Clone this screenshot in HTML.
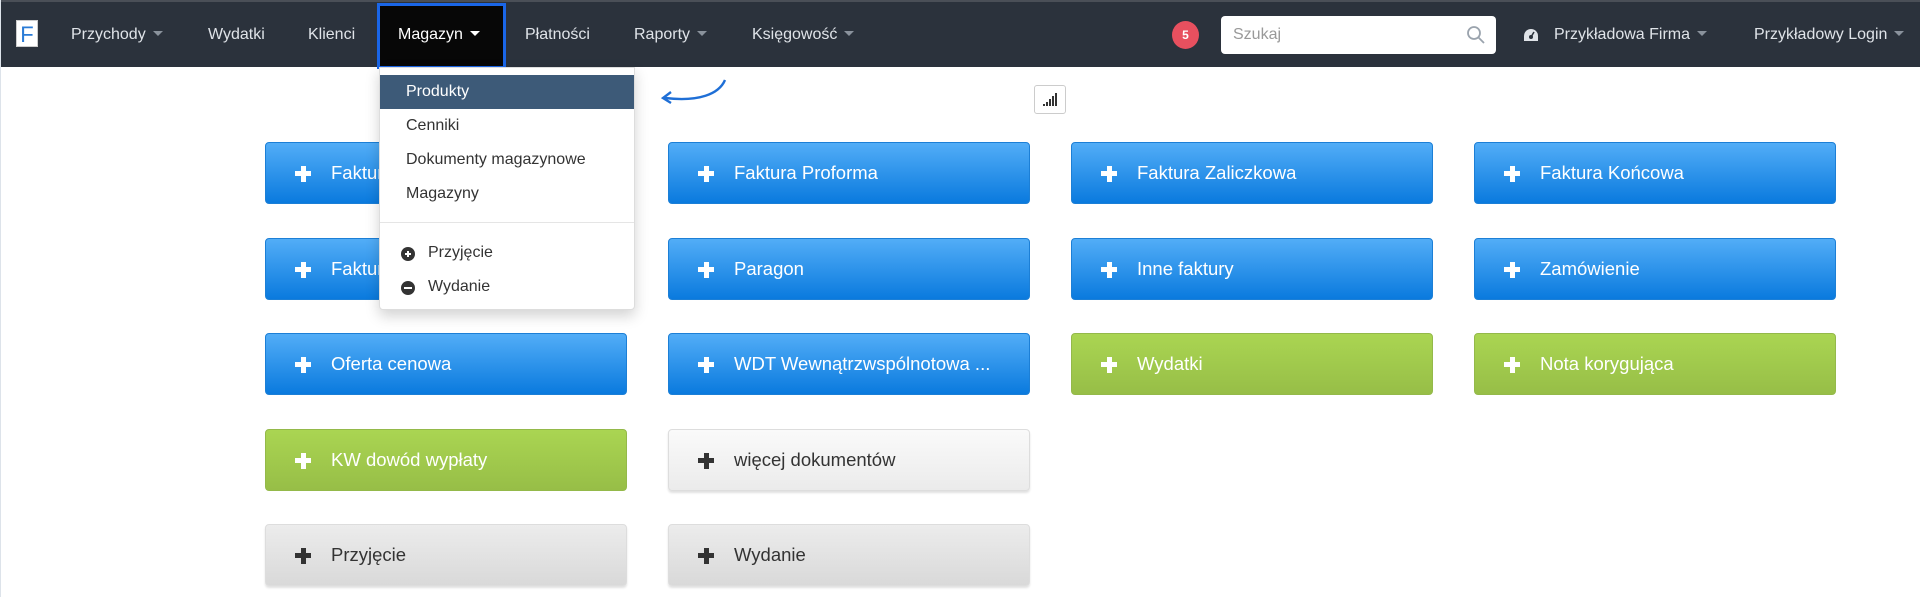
<!DOCTYPE html>
<html><head><meta charset="utf-8"><style>
*{box-sizing:border-box;margin:0;padding:0}
body{width:1920px;height:597px;overflow:hidden;background:#fff;font-family:"Liberation Sans",Arial,sans-serif;position:relative;border-left:1px solid #dde3ea}
.nav{position:absolute;left:0;top:0;width:1920px;height:67px;background:#2b323c;border-top:2px solid #4a4f57}
.nav span{position:absolute;top:24px;color:#dfe3e8;font-size:16px;white-space:nowrap}
.car{display:inline-block;width:0;height:0;border-left:5px solid transparent;border-right:5px solid transparent;border-top:5px solid #8a929c;margin-left:7px;vertical-align:3px}
.logo{position:absolute;left:15px;top:18px;width:22px;height:27px;background:#fff;color:#2a7bd6;font-size:22px;line-height:27px;text-align:center;border:1px solid #ccc}
.mag{position:absolute;left:376px;top:1px;width:129px;height:66px;background:#070707;border:3px solid #1a66e8}
.dd{position:absolute;left:378px;top:67px;width:256px;height:243px;background:#fff;border:1px solid #ddd;border-radius:0 0 4px 4px;box-shadow:0 6px 14px rgba(0,0,0,.18);z-index:5}
.dd div{position:absolute;left:0;width:100%;font-size:16px;color:#333;padding-left:26px}
.btn{position:absolute;width:362px;height:62px;border-radius:4px;color:#fff;font-size:18.5px;line-height:60px;padding-left:65px;white-space:nowrap}
.btn:before{content:"";position:absolute;left:29px;top:28px;width:16px;height:5px;background:currentColor}
.btn:after{content:"";position:absolute;left:34.5px;top:22.5px;width:5px;height:16px;background:currentColor}
.b{background:linear-gradient(#52adf7,#0a7ade);border:1px solid #1c7fd6}
.g{background:linear-gradient(#aad552,#97be47);border:1px solid #94b94a}
.w{background:linear-gradient(#fafafa,#ebebeb);border:1px solid #ddd;color:#333;box-shadow:0 2px 2px rgba(0,0,0,.12)}
.gr{background:linear-gradient(#ececec,#d9d9d9);border:1px solid #ddd;color:#333;box-shadow:0 2px 2px rgba(0,0,0,.12)}
</style></head><body>
<div class="nav">
<div class="logo">F</div>
<span style="left:70px">Przychody<i class="car"></i></span>
<span style="left:207px">Wydatki</span>
<span style="left:307px">Klienci</span>
<div class="mag"></div>
<span style="left:397px;color:#fff">Magazyn<i class="car" style="border-top-color:#fff"></i></span>
<span style="left:524px">Płatności</span>
<span style="left:633px">Raporty<i class="car"></i></span>
<span style="left:751px">Księgowość<i class="car"></i></span>
<div style="position:absolute;left:1171px;top:19px;width:27px;height:28px;border-radius:50%;background:#e8505f;color:#fff;font-size:12px;font-weight:bold;text-align:center;line-height:28px">5</div>
<div style="position:absolute;left:1220px;top:14px;width:275px;height:38px;background:#fff;border-radius:4px"><span style="left:12px;top:10px;color:#999;font-size:16px">Szukaj</span>
<svg style="position:absolute;left:245px;top:9px" width="20" height="20" viewBox="0 0 20 20"><circle cx="8" cy="8" r="6" fill="none" stroke="#9aa3ad" stroke-width="1.8"/><line x1="12.5" y1="12.5" x2="18" y2="18" stroke="#9aa3ad" stroke-width="1.8"/></svg></div>
<svg style="position:absolute;left:1522px;top:26px" width="16" height="14" viewBox="0 0 16 14"><path d="M8 1A7 7 0 0 0 1 8v5h14V8A7 7 0 0 0 8 1z" fill="#dfe3e8"/><circle cx="8" cy="9" r="2" fill="#2b323c"/><line x1="8" y1="9" x2="11" y2="4" stroke="#2b323c" stroke-width="1.5"/></svg>
<span style="left:1553px">Przykładowa Firma<i class="car"></i></span>
<span style="left:1753px">Przykładowy Login<i class="car"></i></span>
</div>
<div class="dd">
<div style="top:7px;height:34px;background:#3d5a78;color:#fff;line-height:34px">Produkty</div>
<div style="top:47px;line-height:22px">Cenniki</div>
<div style="top:81px;line-height:22px">Dokumenty magazynowe</div>
<div style="top:115px;line-height:22px">Magazyny</div>
<div style="top:154px;height:1px;background:#e5e5e5;padding:0"></div>
<div style="top:174px;line-height:22px;padding-left:48px"><b style="position:absolute;left:21px;top:5px;width:14px;height:14px;border-radius:50%;background:#333"></b><b style="position:absolute;left:25px;top:11px;width:6px;height:2px;background:#fff"></b><b style="position:absolute;left:27px;top:9px;width:2px;height:6px;background:#fff"></b>Przyjęcie</div>
<div style="top:208px;line-height:22px;padding-left:48px"><b style="position:absolute;left:21px;top:5px;width:14px;height:14px;border-radius:50%;background:#333"></b><b style="position:absolute;left:24px;top:11px;width:8px;height:2px;background:#fff"></b>Wydanie</div>
</div>
<svg style="position:absolute;left:658px;top:78px" width="70" height="28" viewBox="0 0 70 28"><path d="M66 2C60 16 40 24 6 20" fill="none" stroke="#1f6fd6" stroke-width="2.4"/><path d="M12 14L4 20L12 25" fill="none" stroke="#1f6fd6" stroke-width="2.4"/></svg>
<div style="position:absolute;left:1033px;top:85px;width:32px;height:29px;border:1px solid #ccc;border-radius:3px;background:#fff">
<svg style="position:absolute;left:8px;top:7px" width="14" height="13"><rect x="0" y="11" width="2" height="2" fill="#333"/><rect x="3" y="9" width="2" height="4" fill="#333"/><rect x="6" y="6" width="2" height="7" fill="#333"/><rect x="9" y="3" width="2" height="10" fill="#333"/><rect x="12" y="0" width="2" height="13" fill="#333"/></svg></div>
<div class="btn b" style="left:264px;top:142px">Faktura</div>
<div class="btn b" style="left:667px;top:142px">Faktura Proforma</div>
<div class="btn b" style="left:1070px;top:142px">Faktura Zaliczkowa</div>
<div class="btn b" style="left:1473px;top:142px">Faktura Końcowa</div>
<div class="btn b" style="left:264px;top:238px">Faktura</div>
<div class="btn b" style="left:667px;top:238px">Paragon</div>
<div class="btn b" style="left:1070px;top:238px">Inne faktury</div>
<div class="btn b" style="left:1473px;top:238px">Zamówienie</div>
<div class="btn b" style="left:264px;top:333px">Oferta cenowa</div>
<div class="btn b" style="left:667px;top:333px">WDT Wewnątrzwspólnotowa ...</div>
<div class="btn g" style="left:1070px;top:333px">Wydatki</div>
<div class="btn g" style="left:1473px;top:333px">Nota korygująca</div>
<div class="btn g" style="left:264px;top:429px">KW dowód wypłaty</div>
<div class="btn w" style="left:667px;top:429px">więcej dokumentów</div>
<div class="btn gr" style="left:264px;top:524px">Przyjęcie</div>
<div class="btn gr" style="left:667px;top:524px">Wydanie</div>
</body></html>
